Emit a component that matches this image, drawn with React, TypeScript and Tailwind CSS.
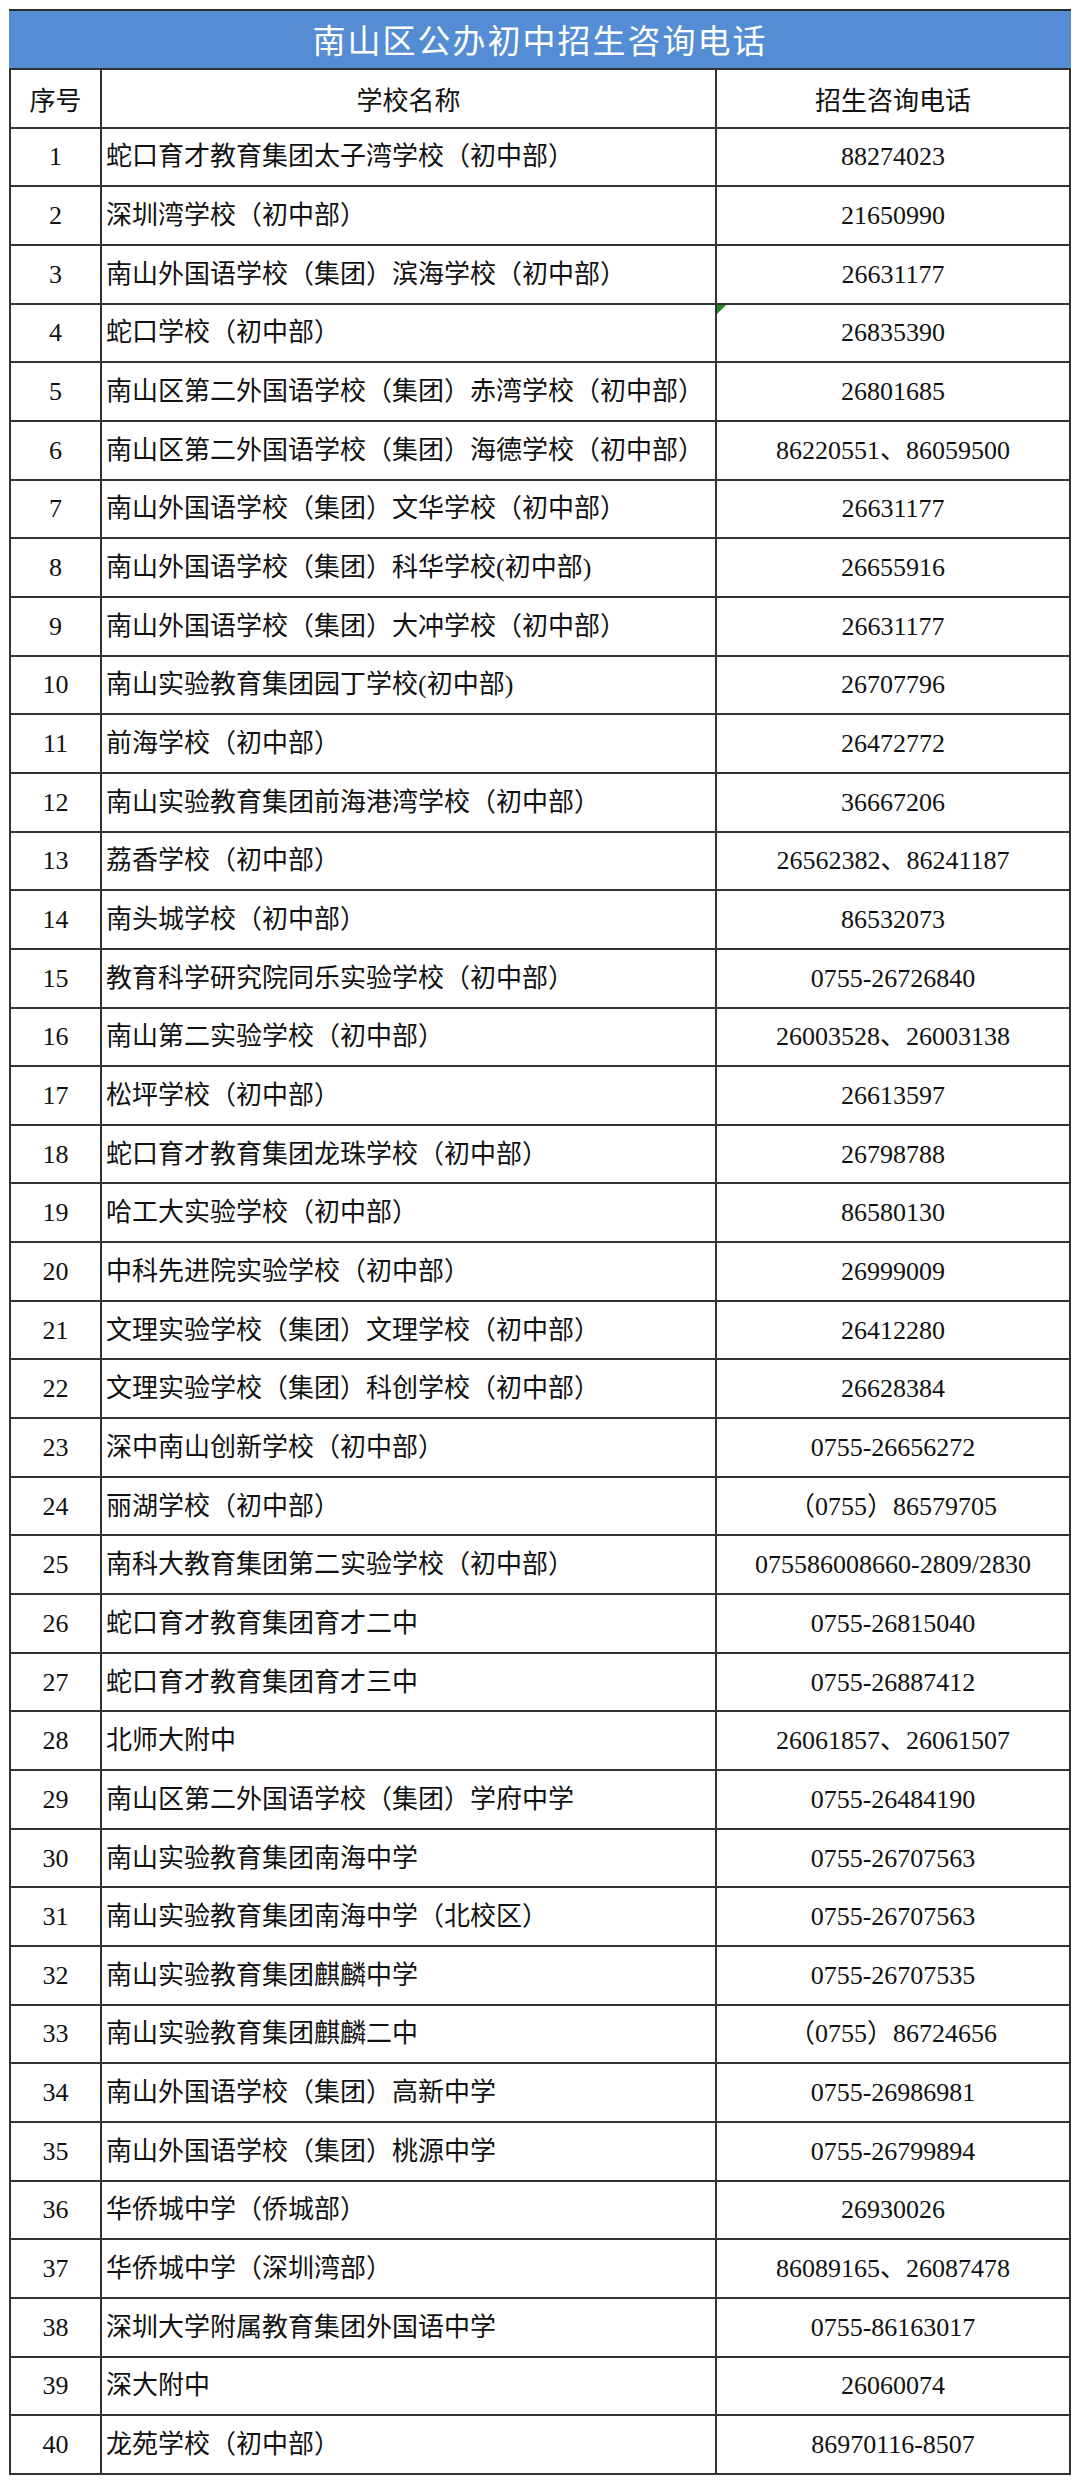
import React from 'react';

type Row = [string, string];

const rows: Row[] = [
  ['蛇口育才教育集团太子湾学校（初中部）', '88274023'],
  ['深圳湾学校（初中部）', '21650990'],
  ['南山外国语学校（集团）滨海学校（初中部）', '26631177'],
  ['蛇口学校（初中部）', '26835390'],
  ['南山区第二外国语学校（集团）赤湾学校（初中部）', '26801685'],
  ['南山区第二外国语学校（集团）海德学校（初中部）', '86220551、86059500'],
  ['南山外国语学校（集团）文华学校（初中部）', '26631177'],
  ['南山外国语学校（集团）科华学校(初中部)', '26655916'],
  ['南山外国语学校（集团）大冲学校（初中部）', '26631177'],
  ['南山实验教育集团园丁学校(初中部)', '26707796'],
  ['前海学校（初中部）', '26472772'],
  ['南山实验教育集团前海港湾学校（初中部）', '36667206'],
  ['荔香学校（初中部）', '26562382、86241187'],
  ['南头城学校（初中部）', '86532073'],
  ['教育科学研究院同乐实验学校（初中部）', '0755-26726840'],
  ['南山第二实验学校（初中部）', '26003528、26003138'],
  ['松坪学校（初中部）', '26613597'],
  ['蛇口育才教育集团龙珠学校（初中部）', '26798788'],
  ['哈工大实验学校（初中部）', '86580130'],
  ['中科先进院实验学校（初中部）', '26999009'],
  ['文理实验学校（集团）文理学校（初中部）', '26412280'],
  ['文理实验学校（集团）科创学校（初中部）', '26628384'],
  ['深中南山创新学校（初中部）', '0755-26656272'],
  ['丽湖学校（初中部）', '（0755）86579705'],
  ['南科大教育集团第二实验学校（初中部）', '075586008660-2809/2830'],
  ['蛇口育才教育集团育才二中', '0755-26815040'],
  ['蛇口育才教育集团育才三中', '0755-26887412'],
  ['北师大附中', '26061857、26061507'],
  ['南山区第二外国语学校（集团）学府中学', '0755-26484190'],
  ['南山实验教育集团南海中学', '0755-26707563'],
  ['南山实验教育集团南海中学（北校区）', '0755-26707563'],
  ['南山实验教育集团麒麟中学', '0755-26707535'],
  ['南山实验教育集团麒麟二中', '（0755）86724656'],
  ['南山外国语学校（集团）高新中学', '0755-26986981'],
  ['南山外国语学校（集团）桃源中学', '0755-26799894'],
  ['华侨城中学（侨城部）', '26930026'],
  ['华侨城中学（深圳湾部）', '86089165、26087478'],
  ['深圳大学附属教育集团外国语中学', '0755-86163017'],
  ['深大附中', '26060074'],
  ['龙苑学校（初中部）', '86970116-8507'],
];

export default function App() {
  return (
    <div className="min-h-[2485px] bg-white pl-[9px] pt-[9px] font-['Liberation_Serif','Noto_Sans_CJK_SC',serif] text-[#111]">
      <div className="w-[1062px]">
        <div className="flex h-[59px] items-center justify-center border-t-2 border-[#2b2b2b] bg-[#548dd4] text-[33px] tracking-[2px] text-white font-['Noto_Sans_CJK_SC',sans-serif]">
          南山区公办初中招生咨询电话
        </div>
        <div className="border-x-2 border-t-2 border-[#333]">
          <div className="flex h-[58.67px] border-b-2 border-[#333] text-[26px] font-['Noto_Sans_CJK_SC',sans-serif]">
            <div className="flex w-[91px] items-center justify-center border-r-2 border-[#333]">序号</div>
            <div className="flex w-[615px] items-center justify-center border-r-2 border-[#333]">学校名称</div>
            <div className="flex flex-1 items-center justify-center">招生咨询电话</div>
          </div>
          {rows.map(([name, phone], i) => (
            <div key={i} className="flex h-[58.67px] border-b-2 border-[#333] text-[26px]">
              <div className="flex w-[91px] items-center justify-center border-r-2 border-[#333]">{i + 1}</div>
              <div className="flex w-[615px] items-center border-r-2 border-[#333] pl-[4px]">{name}</div>
              <div className="relative flex flex-1 items-center justify-center">
                {i === 3 && (
                  <svg className="absolute left-0 top-0" width="9" height="9" viewBox="0 0 9 9">
                    <polygon points="0,0 9,0 0,9" fill="#1e8a1e" />
                  </svg>
                )}
                {phone}
              </div>
            </div>
          ))}
        </div>
      </div>
    </div>
  );
}
